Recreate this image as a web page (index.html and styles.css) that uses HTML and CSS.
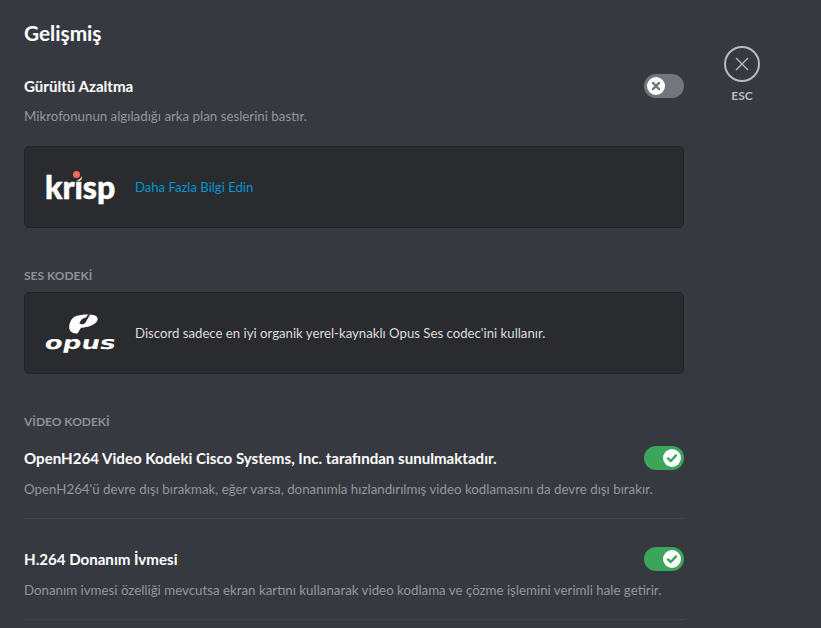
FILE: index.html
```html
<!DOCTYPE html>
<html lang="tr">
<head>
    <meta charset="UTF-8">
    <meta name="viewport" content="width=device-width, initial-scale=1.0">
    <title>Gelişmiş</title>
    <link rel="stylesheet" href="styles.css">
</head>
<body>
    <main class="settings">
        <h1 class="page-title">Gelişmiş</h1>

        <div class="option option-first">
            <div class="option-head">
                <h3 class="option-title">Gürültü Azaltma</h3>
                <span class="toggle toggle-off">
                    <span class="knob">
                        <svg viewBox="0 0 20 20" width="20" height="20">
                            <path d="M6.2 6.2l7.6 7.6M13.8 6.2l-7.6 7.600" stroke="#72767d" stroke-width="3" stroke-linecap="round" fill="none"/>
                        </svg>
                    </span>
                </span>
            </div>
            <p class="option-desc">Mikrofonunun algıladığı arka plan seslerini bastır.</p>
        </div>

        <div class="card">
            <div class="krisp-logo">krisp<span class="krisp-dot"></span></div>
            <a class="card-link" href="#">Daha Fazla Bilgi Edin</a>
        </div>

        <h5 class="section-label label-audio">SES KODEKİ</h5>
        <div class="card">
            <div class="opus-logo">
                <svg viewBox="0 0 30 20" width="30" height="20">
                    <path d="M8 2C13 .3 22 -.3 27 1.500 30.500 3 30.300 6.500 27.500 9 24 12 18 13.500 13 13.800L9.500 19.500C6 19.800 2.500 18.500 1.500 15.500 .3 10.500 3 4 8 2Z" fill="#fff"/>
                    <path d="M21.500 0C19.500 .5 18.800 2 18.200 3.500 14.800 4 12 6.500 11.500 9.500 13.500 11 16.500 10.200 17.500 8.500L21.800 1Z" fill="#2a2b2f"/>
                </svg>
                <span class="opus-text">opus</span>
            </div>
            <p class="card-text">Discord sadece en iyi organik yerel-kaynaklı Opus Ses codec'ini kullanır.</p>
        </div>

        <h5 class="section-label label-video">VİDEO KODEKİ</h5>
        <div class="option option-line">
            <div class="option-head">
                <h3 class="option-title">OpenH264 Video Kodeki Cisco Systems, Inc. tarafından sunulmaktadır.</h3>
                <span class="toggle toggle-on">
                    <span class="knob">
                        <svg viewBox="0 0 20 20" width="20" height="20">
                            <path d="M5 10.500l3.500 3.300L15 6.800" stroke="#3ba55c" stroke-width="3" stroke-linecap="round" stroke-linejoin="round" fill="none"/>
                        </svg>
                    </span>
                </span>
            </div>
            <p class="option-desc">OpenH264'ü devre dışı bırakmak, eğer varsa, donanımla hızlandırılmış video kodlamasını da devre dışı bırakır.</p>
        </div>

        <div class="option option-line">
            <div class="option-head">
                <h3 class="option-title">H.264 Donanım İvmesi</h3>
                <span class="toggle toggle-on">
                    <span class="knob">
                        <svg viewBox="0 0 20 20" width="20" height="20">
                            <path d="M5 10.500l3.500 3.300L15 6.800" stroke="#3ba55c" stroke-width="3" stroke-linecap="round" stroke-linejoin="round" fill="none"/>
                        </svg>
                    </span>
                </span>
            </div>
            <p class="option-desc">Donanım ivmesi özelliği mevcutsa ekran kartını kullanarak video kodlama ve çözme işlemini verimli hale getirir.</p>
        </div>
    </main>

    <aside class="tools">
        <div class="close-btn">
            <svg viewBox="0 0 18 18" width="18" height="18">
                <path d="M3 3l12 12M15 3L3 15" stroke="#b9bbbe" stroke-width="1.300" fill="none"/>
            </svg>
        </div>
        <div class="close-label">ESC</div>
    </aside>
</body>
</html>
```

FILE: styles.css
```css
html, body {
    height: 100%;
}

body {
    display: flex;
    margin: 0;
    overflow: hidden;
    background-color: #36393f;
    font-family: "Lato", "Open Sans", sans-serif;
    color: #fff;
}

.settings {
    width: 660px;
    margin-left: 24px;
    flex-shrink: 0;
}

.page-title {
    margin: 19px 0 0;
    font-size: 20.800px;
    line-height: 28px;
    font-weight: 700;
}

.option-first {
    margin-top: 27px;
}

.option-head {
    display: flex;
    justify-content: space-between;
    align-items: center;
    height: 24px;
}

.option-title {
    margin: 0;
    font-size: 15.100px;
    line-height: 24px;
    font-weight: 700;
}

.option-desc {
    margin: 8px 0 0;
    font-size: 13.300px;
    line-height: 20px;
    color: #94979c;
}

.option-line {
    padding-bottom: 19px;
    border-bottom: 1px solid #42454b;
    margin-bottom: 28px;
}

.option-line .option-desc {
    margin-top: 9px;
}

.toggle {
    display: flex;
    align-items: center;
    width: 40px;
    height: 24px;
    padding: 0 3px;
    box-sizing: border-box;
    border-radius: 14px;
}

.toggle-off {
    background-color: #72767d;
}

.toggle-on {
    background-color: #3ba55c;
    justify-content: flex-end;
}

.knob {
    display: flex;
    width: 18px;
    height: 18px;
    align-items: center;
    justify-content: center;
    border-radius: 50%;
    background-color: #fff;
}

.knob svg {
    width: 16px;
    height: 16px;
}

.card {
    display: flex;
    align-items: center;
    height: 82px;
    box-sizing: border-box;
    margin-top: 20px;
    padding-left: 20px;
    background-color: #2a2b2f;
    border: 1px solid #222428;
    border-radius: 5px;
}

.krisp-logo {
    position: relative;
    width: 90px;
    font-size: 32px;
    line-height: 40px;
    font-weight: 900;
    color: #fff;
    -webkit-text-stroke: 0.5px #fff;
}

.krisp-dot {
    position: absolute;
    top: 4px;
    left: 28px;
    width: 7px;
    height: 7px;
    border-radius: 50%;
    background-color: #f96854;
    box-shadow: 0 0 0 2px #2a2b2f;
}

.card-link {
    font-size: 13.100px;
    color: #0096cf;
    text-decoration: none;
}

.card-text {
    margin: 0;
    font-size: 13.200px;
    color: #dcddde;
}

.opus-logo {
    display: flex;
    flex-direction: column;
    align-items: center;
    width: 70px;
    margin-right: 20px;
}

.opus-logo svg {
    display: block;
    margin-left: 5px;
}

.opus-text {
    font-family: "DejaVu Sans", sans-serif;
    font-size: 18px;
    line-height: 18px;
    font-weight: 700;
    color: #fff;
    transform: scaleX(1.450) skewX(-8deg);
}

.section-label {
    margin: 0;
    font-size: 12px;
    line-height: 16px;
    font-weight: 700;
    color: #8e9297;
}

.label-audio {
    margin-top: 40px;
    margin-bottom: -12px;
}

.label-video {
    margin-top: 40px;
    margin-bottom: 16px;
}

.tools {
    margin-left: 40px;
    padding-top: 46px;
    width: 36px;
}

.close-btn {
    display: flex;
    align-items: center;
    justify-content: center;
    width: 36px;
    height: 36px;
    box-sizing: border-box;
    border: 2px solid #b9bbbe;
    border-radius: 50%;
}

.close-label {
    margin-top: 6px;
    font-size: 12px;
    line-height: 16px;
    font-weight: 700;
    text-align: center;
    color: #b9bbbe;
}
```
